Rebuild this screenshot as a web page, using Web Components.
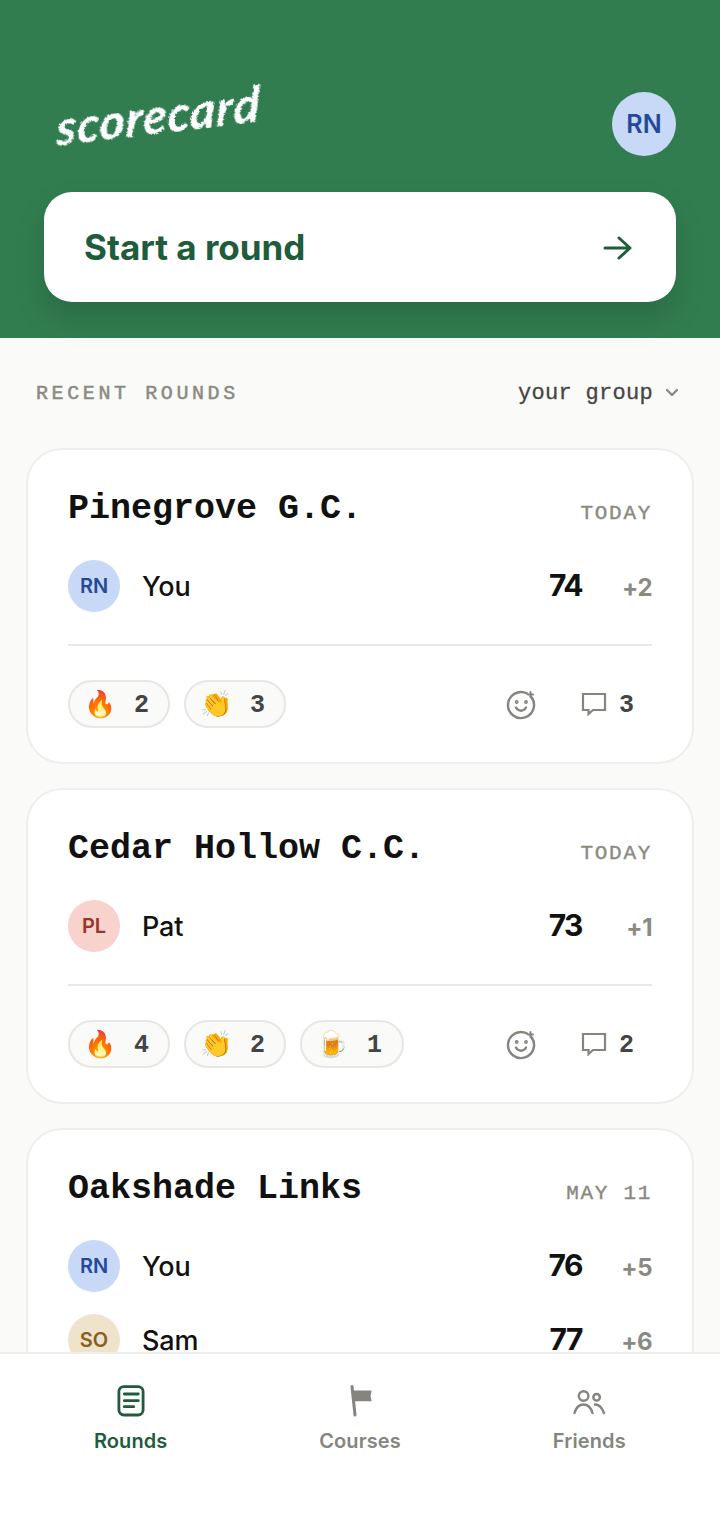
<!DOCTYPE html>
<html><head><meta charset="utf-8"><style>
html,body{margin:0;padding:0;background:#fafaf8}
body{width:720px;height:1514px;overflow:hidden;font-family:"Inter","Liberation Sans",sans-serif}
</style></head><body>
<sc-app>
  <sc-header slot="header"></sc-header>
  <sc-section-head></sc-section-head>
  <sc-card course="Pinegrove G.C." date="TODAY" players="RN|You|74|+2|b" reactions="🔥:2,👏:3" comments="3"></sc-card>
  <sc-card course="Cedar Hollow C.C." date="TODAY" players="PL|Pat|73|+1|r" reactions="🔥:4,👏:2,🍺:1" comments="2"></sc-card>
  <sc-card course="Oakshade Links" date="MAY 11" players="RN|You|76|+5|b;SO|Sam|77|+6|y" reactions="" comments=""></sc-card>
  <sc-tabbar slot="tabs"></sc-tabbar>
</sc-app>
<script>
const MONO='"Liberation Mono","DejaVu Sans Mono",monospace';
const SANS='"Inter","Liberation Sans",sans-serif';
function def(name,html){customElements.define(name,class extends HTMLElement{connectedCallback(){if(this.shadowRoot)return;const r=this.attachShadow({mode:'open'});r.innerHTML=typeof html==='function'?html(this):html;}})}
def('sc-app',`<style>:host{display:flex;flex-direction:column;height:1514px;overflow:hidden}
.main{flex:1;min-height:0;overflow:hidden;display:flex;flex-direction:column;gap:24px;padding:0 26px}</style>
<slot name="header"></slot><div class="main"><slot></slot></div><slot name="tabs"></slot>`);
def('sc-avatar',t=>{const c={b:['#c8d9f7','#25489a'],r:['#f8d2cc','#96352b'],y:['#f0e3cc','#85611f']}[t.getAttribute('tone')||'b'];const s=t.getAttribute('size')||52;
return `<style>:host{display:flex;flex:none;width:${s}px;height:${s}px;border-radius:50%;align-items:center;justify-content:center;background:${c[0]};color:${c[1]};font:600 ${s>60?25:20}px ${SANS}}</style><slot></slot>`});
def('sc-header',`<style>:host{display:block;flex:none;background:#317d50;height:338px;box-sizing:border-box;padding:92px 44px 0}
.top{display:flex;justify-content:space-between;align-items:flex-start;height:100px}
.logo{font:italic 700 49px "Lato",sans-serif;color:#fff;margin:6px 0 0 12px;transform:rotate(-7deg) skewX(-8deg);transform-origin:0 60%;filter:url(#r);letter-spacing:.8px}
.btn{display:flex;justify-content:space-between;align-items:center;height:110px;background:#fff;border-radius:28px;padding:0 44px 0 40px;box-shadow:0 16px 32px rgba(0,0,0,.14);color:#1f5c3b;font:700 35px ${SANS};letter-spacing:0}
svg.f{position:absolute;width:0;height:0}</style>
<svg class="f"><filter id="r"><feTurbulence baseFrequency=".35" numOctaves="2" seed="3"/><feDisplacementMap in="SourceGraphic" scale="2.4"/></filter></svg>
<div class="top"><span class="logo">scorecard</span><sc-avatar size="64" tone="b">RN</sc-avatar></div>
<div class="btn"><span>Start a round</span><svg width="32" height="32" viewBox="0 0 32 32" fill="none" stroke="#1f5c3b" stroke-width="3" stroke-linecap="round" stroke-linejoin="round"><path d="M5 17h25M19 7l11 10-11 10"/></svg></div>`);
def('sc-section-head',`<style>:host{display:flex;flex:none;justify-content:space-between;align-items:center;height:110px;margin:0 0 -24px;box-sizing:border-box;padding:0 15px 0 10px}
.l{font:400 20px ${MONO};letter-spacing:3.6px;color:#8a8a82;-webkit-text-stroke:.5px #8a8a82}
.r{display:flex;align-items:center;gap:12px;font:400 22px ${MONO};letter-spacing:.3px;color:#444;-webkit-text-stroke:.3px #444}</style>
<span class="l">RECENT ROUNDS</span><span class="r">your group<svg width="14" height="10" viewBox="0 0 14 10" fill="none" stroke="#8a8a82" stroke-width="2.4" stroke-linecap="round" stroke-linejoin="round"><path d="M2 2l5 5 5-5"/></svg></span>`);
def('sc-card',t=>{
 const rows=t.getAttribute('players').split(';').map(p=>{const[a,n,s,d,c]=p.split('|');return `<div class="p"><sc-avatar tone="${c}">${a}</sc-avatar><span class="n">${n}</span><span class="s">${s}</span><span class="d">${d}</span></div>`}).join('');
 const rx=t.getAttribute('reactions');
 const foot=rx?`<div class="rule"></div><div class="foot"><div class="chips">${rx.split(',').map(x=>{const[e,n]=x.split(':');return `<span class="chip${e==='🍺'?' wide':''}"><span class="e">${e}</span><b>${n}</b></span>`}).join('')}</div>
 <svg class="smile" width="30" height="30" viewBox="0 0 30 30" fill="none" stroke="#85857d" stroke-width="2.400" stroke-linecap="round"><path d="M24.900 6.600A13 13 0 1 1 21 3.500"/><path d="M10 17.500c1.200 2.200 3 3.200 5 3.200s3.800-1 5-3.200"/><circle cx="10.700" cy="12" r=".7" fill="#85857d"/><circle cx="20" cy="12" r=".7" fill="#85857d"/><path d="M24.500 2v5M22 4.500h5" stroke-width="2"/></svg>
 <span class="cm"><svg width="26" height="24" viewBox="0 0 26 24" fill="none" stroke="#85857d" stroke-width="2.200" stroke-linejoin="miter"><path d="M2 2h22v16H12l-4.500 4v-4H2z"/></svg><b>${t.getAttribute('comments')}</b></span></div>`:'';
 return `<style>:host{display:block;flex:none;background:#fff;border:2px solid #eeeeeb;border-radius:36px;box-sizing:border-box;padding:38px 40px 34px}
 .h{display:flex;justify-content:space-between;align-items:flex-start;height:36px;margin-bottom:36px}
 .c{font:700 35px ${MONO};color:#111;line-height:36px;margin-top:3px}
 .dt{font:400 21px ${MONO};color:#8a8a82;letter-spacing:1.700px;line-height:24px;margin-top:14px;-webkit-text-stroke:.4px #8a8a82}
 .ps{display:flex;flex-direction:column;gap:22px}
 .p{display:flex;align-items:center;height:52px}
 .n{flex:1;margin-left:22px;font:500 27px ${SANS};color:#111;letter-spacing:-.1px}
 .s{font:700 30px ${SANS};color:#111;letter-spacing:-1.500px;margin-bottom:2px}
 .d{width:70px;text-align:right;font:700 24px ${SANS};color:#8a8a82;letter-spacing:-.5px;margin-top:2px}
 .rule{height:2px;background:#e8e8e5;margin-top:32px}
 .foot{display:flex;align-items:center;height:48px;margin-top:34px}
 .chips{display:flex;gap:14px;flex:1}
 .chip{display:flex;align-items:center;gap:18px;height:48px;width:102px;box-sizing:border-box;border:2px solid #e6e6e3;border-radius:24px;background:#fafaf8;padding:0 0 0 14px}
 .chip.wide{width:104px;gap:19px}
 .e{font:26px "Noto Color Emoji","Apple Color Emoji",sans-serif;width:32px;text-align:center}
 b{font:700 25px ${MONO};color:#444;margin-top:2px}
 .smile{margin-right:45px;margin-top:2px}
 .cm{display:flex;align-items:center;gap:12px;margin-right:18px}
 </style><div class="h"><span class="c">${t.getAttribute('course')}</span><span class="dt">${t.getAttribute('date')}</span></div><div class="ps">${rows}</div>${foot}`});
def('sc-tabbar',`<style>:host{display:grid;grid-template-columns:repeat(3,1fr);flex:none;height:162px;box-sizing:border-box;background:#fff;border-top:2px solid #eeeeeb;padding:31px 16px 0 16px}
.t{display:flex;flex-direction:column;align-items:center;gap:12px;font:600 20px ${SANS};color:#85857d;letter-spacing:.1px}
.t.on{color:#1f5c3b}svg{display:block}</style>
<div class="t on"><svg width="32" height="32" viewBox="0 0 32 32" fill="none" stroke="#1f5c3b" stroke-width="2.800" stroke-linecap="round"><rect x="3.900" y="1.600" width="24.200" height="28.400" rx="5"/><path d="M9.300 9h14M9.300 15.700h14M9.300 21.700h9.400"/></svg><span>Rounds</span></div>
<div class="t"><svg width="32" height="32" viewBox="0 0 32 32"><path d="M8 1.500l3 28.500" stroke="#85857d" stroke-width="3" stroke-linecap="round"/><path d="M9 5.500h18.700l-1.200 5.400 1.200 5.400H10z" fill="#85857d"/></svg><span>Courses</span></div>
<div class="t"><svg width="36" height="32" viewBox="0 0 36 32" fill="none" stroke="#85857d" stroke-width="2.400" stroke-linecap="round"><circle cx="12.600" cy="11" r="4.800"/><circle cx="25.600" cy="12.300" r="3.300"/><path d="M3.500 28c1.500-5 5-8.500 9-8.500s7.500 3.500 9 8.500M24 19.500c4 0 7 3 9 8.500"/></svg><span>Friends</span></div>`);
</script></body></html>
